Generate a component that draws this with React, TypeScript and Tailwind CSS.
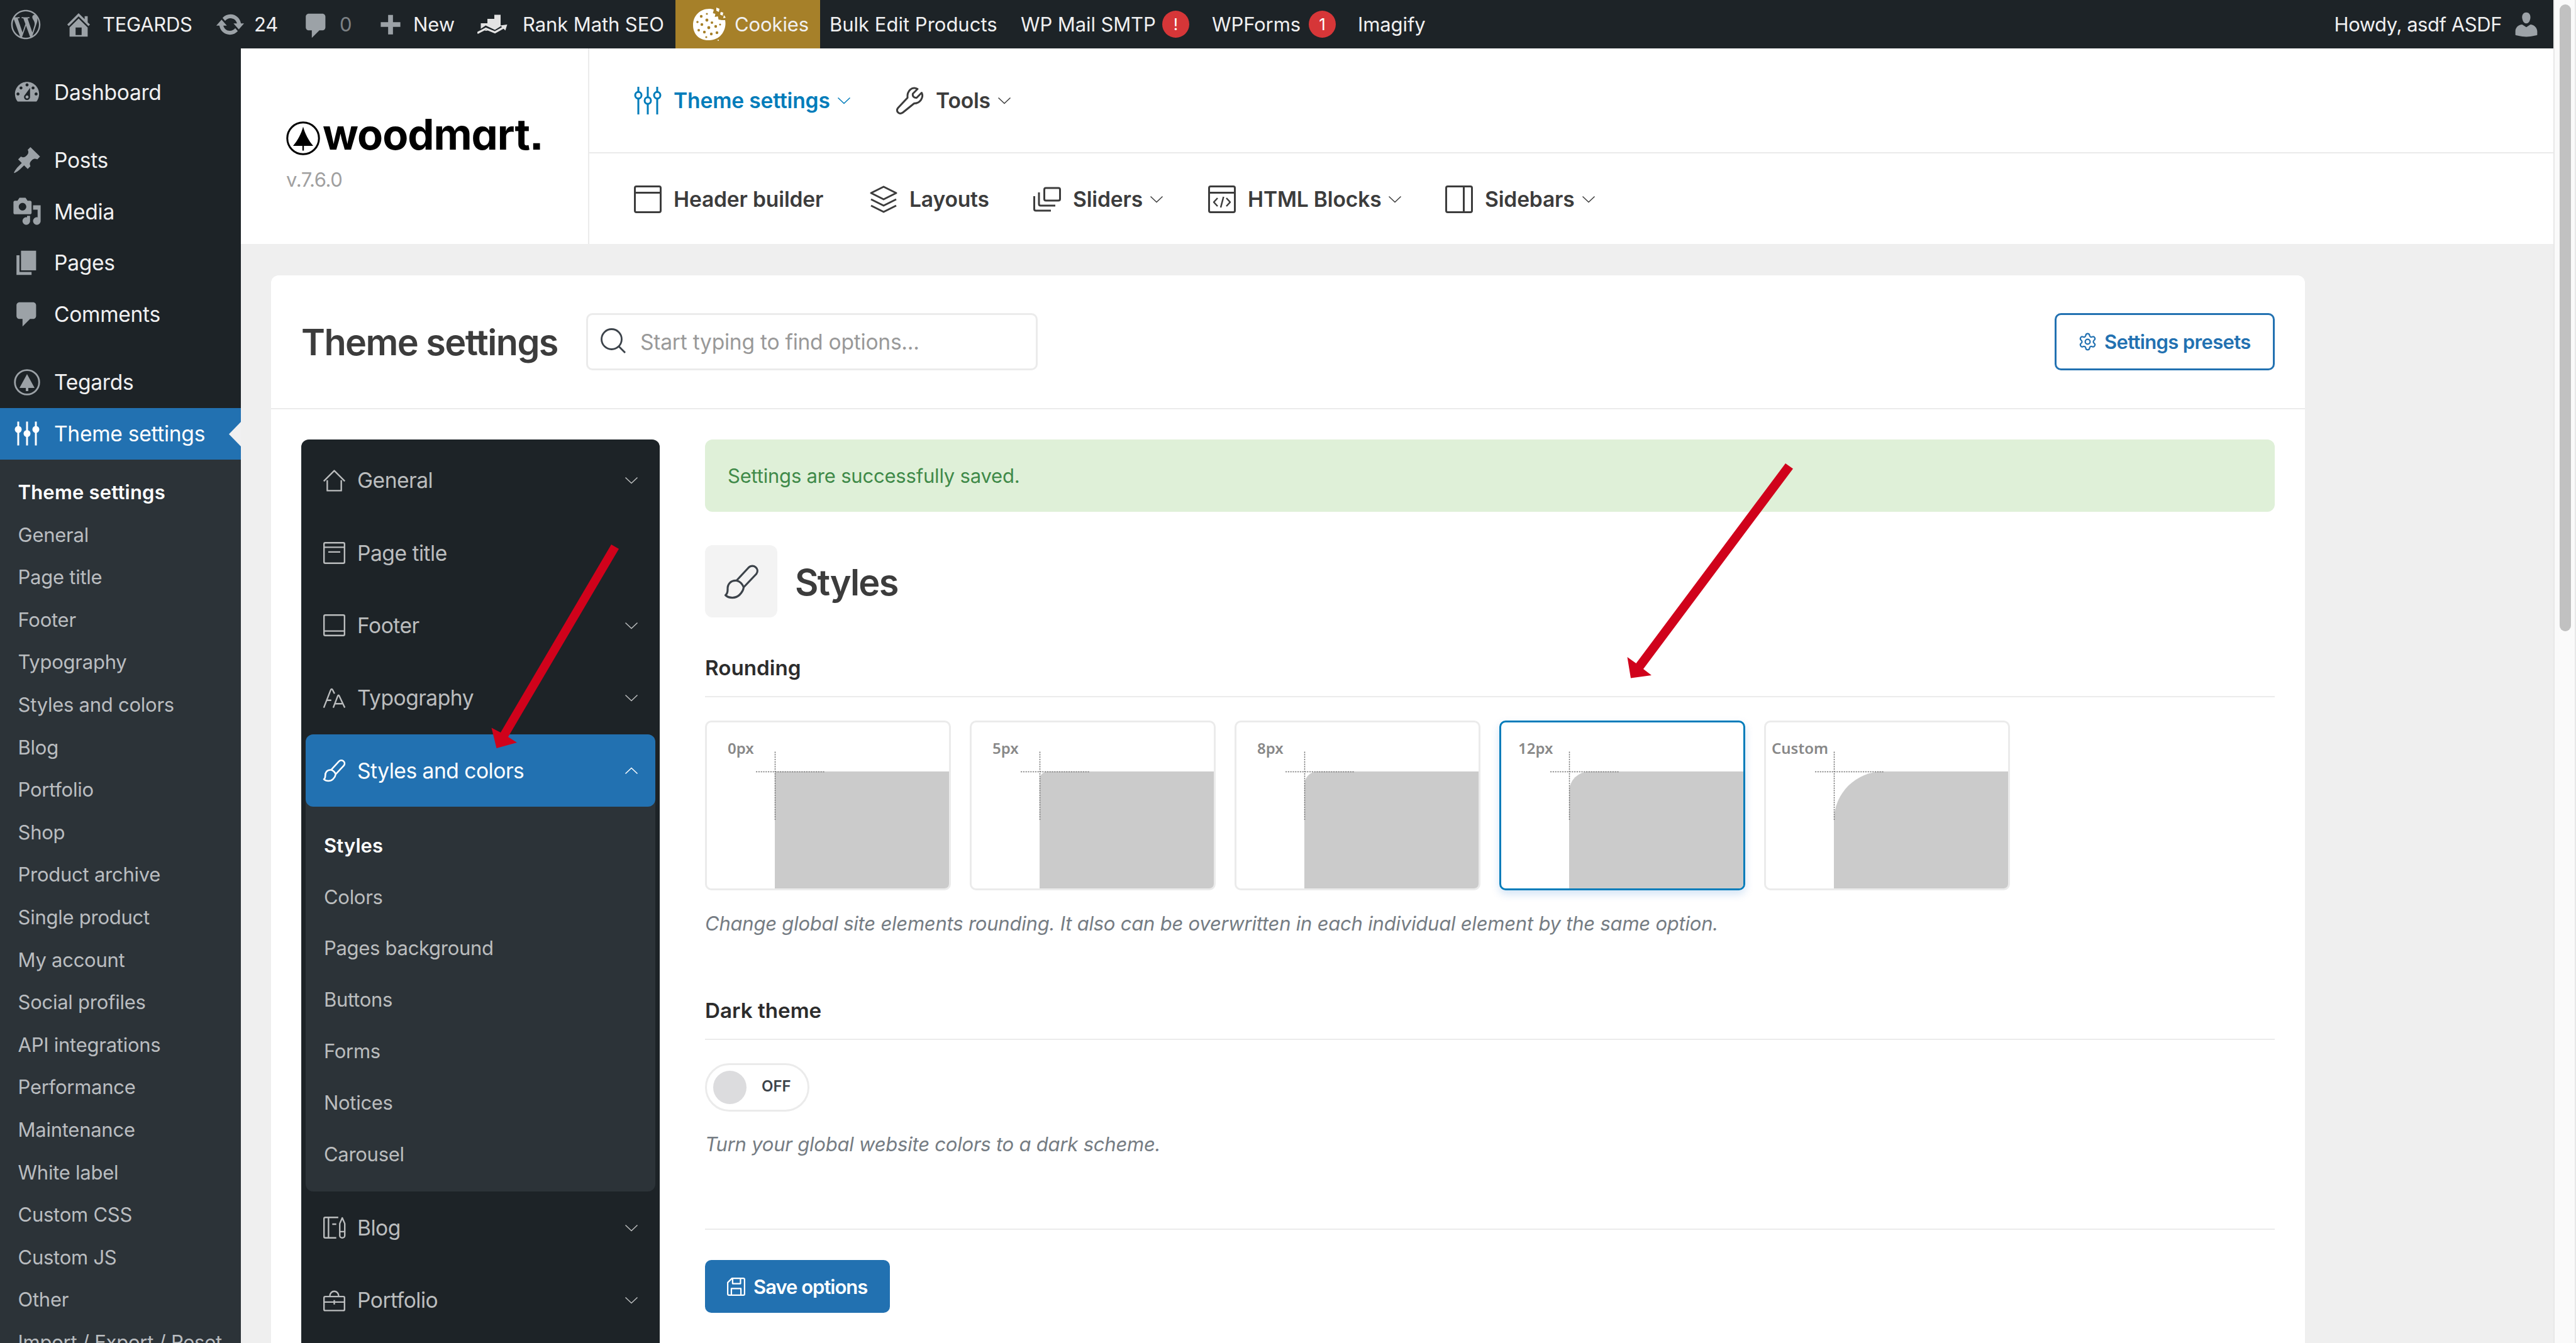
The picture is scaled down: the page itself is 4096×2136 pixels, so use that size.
import React from "react";
import clsx from "clsx";
import { Settings } from "lucide-react";
import { FaWordpressSimple } from "react-icons/fa";

type IconProps = { className?: string };

const dashicons = {
  home: "M16 8.5l1.53 1.53-1.06 1.06L10 4.6l-6.47 6.49-1.06-1.06L10 2.5l4 4v-2h2v4zm-6-2.46l6 5.99V18H4v-5.97zM12 17v-5H8v5h4z",
  update:
    "M10.2 3.28c3.53 0 6.43 2.61 6.92 6h2.08l-3.5 4-3.5-4h2.32c-.45-1.97-2.21-3.45-4.32-3.45-1.45 0-2.73.71-3.54 1.78L4.95 5.66C6.23 4.2 8.11 3.28 10.2 3.28zm-.4 13.44c-3.52 0-6.43-2.61-6.92-6H.8l3.5-4c1.17 1.33 2.33 2.67 3.5 4H5.48c.45 1.97 2.21 3.45 4.32 3.45 1.45 0 2.73-.71 3.54-1.78l1.71 1.95c-1.28 1.46-3.15 2.38-5.25 2.38z",
  comments:
    "M5 2h9c1.1 0 2 .9 2 2v7c0 1.1-.9 2-2 2h-2l-5 5v-5H5c-1.1 0-2-.9-2-2V4c0-1.1.9-2 2-2z",
  plus: "M8.4 3.6h3.2v4.8h4.9v3.2h-4.9v5H8.4v-5H3.5V8.4h4.9z",
  page: "M6 15V2h10v13H6zm-1 1h8v2H3V5h2v11z",
  post: "M10.44 3.02l1.82-1.82 6.36 6.35-1.83 1.82c-1.05-.68-2.48-.57-3.41.36l-.75.75c-.92.93-1.04 2.35-.35 3.41l-1.83 1.82-2.41-2.41-2.8 2.79c-.42.42-3.38 2.71-3.8 2.29s1.86-3.39 2.28-3.81l2.79-2.79L4.1 9.36l1.83-1.82c1.05.69 2.48.57 3.4-.36l.75-.75c.93-.92 1.05-2.35.36-3.41z",
  media:
    "M13 11V4c0-.55-.45-1-1-1h-1.67L9 1H5L3.67 3H2c-.55 0-1 .45-1 1v7c0 .55.45 1 1 1h10c.55 0 1-.45 1-1zM7 4.5c1.38 0 2.5 1.12 2.5 2.5S8.38 9.5 7 9.5 4.5 8.38 4.5 7 5.62 4.5 7 4.5zM14 6h5v10.5c0 1.38-1.12 2.5-2.5 2.5S14 17.88 14 16.5s1.12-2.5 2.5-2.5c.17 0 .34.02.5.05V9h-3V6zm-4 8.05V13h2v3.5c0 1.38-1.12 2.5-2.5 2.5S7 17.88 7 16.5 8.12 14 9.5 14c.17 0 .34.02.5.05z",
  dashboard:
    "M3.76 16h12.48c1.1-1.37 1.76-3.11 1.76-5 0-4.42-3.58-8-8-8s-8 3.58-8 8c0 1.89.66 3.63 1.76 5zM10 4c.55 0 1 .45 1 1s-.45 1-1 1-1-.45-1-1 .45-1 1-1zM6 6c.55 0 1 .45 1 1s-.45 1-1 1-1-.45-1-1 .45-1 1-1zm8 0c.55 0 1 .45 1 1s-.45 1-1 1-1-.45-1-1 .45-1 1-1zm-5.37 5.55L12 7v6c0 1.1-.9 2-2 2s-2-.9-2-2c0-.57.24-1.08.63-1.45zM4 10c.55 0 1 .45 1 1s-.45 1-1 1-1-.45-1-1 .45-1 1-1zm12 0c.55 0 1 .45 1 1s-.45 1-1 1-1-.45-1-1 .45-1 1-1zm-5 3c0-.55-.45-1-1-1s-1 .45-1 1 .45 1 1 1 1-.45 1-1z",
  user: "M10 9.25c-2.27 0-2.73-3.44-2.73-3.44C7 4.02 7.82 2 9.97 2c2.16 0 2.98 2.02 2.71 3.81 0 0-.41 3.44-2.68 3.44zm0 2.57L12.72 10c2.39 0 4.52 2.33 4.52 4.53v2.49s-3.65 1.13-7.24 1.13c-3.65 0-7.24-1.13-7.24-1.13v-2.49c0-2.25 1.94-4.48 4.47-4.48z",
};

const Dashicon = ({ name, className }: { name: keyof typeof dashicons; className?: string }) => (
  <svg viewBox="0 0 20 20" className={clsx("size-[48px] shrink-0 fill-[#9ca2a7]", className)}>
    <path fillRule="evenodd" d={dashicons[name]} />
  </svg>
);

// Outlined icon on a 44px grid
const Line = ({
  children,
  className = "size-[44px]",
  sw = 3,
}: {
  children: React.ReactNode;
  className?: string;
  sw?: number;
}) => (
  <svg
    viewBox="0 0 44 44"
    fill="none"
    stroke="currentColor"
    strokeWidth={sw}
    strokeLinejoin="round"
    className={clsx("shrink-0 overflow-visible", className)}
  >
    {children}
  </svg>
);

const SlidersIcon = () => (
  <Line>
    <path d="M7 0v8M7 19v25M22 0v16.5M22 27.500v16.500M37 0v8M37 19v25" />
    <ellipse cx="7" cy="13.500" rx="5" ry="5.300" />
    <ellipse cx="22" cy="22" rx="5" ry="5.300" />
    <ellipse cx="37" cy="13.500" rx="5" ry="5.300" />
  </Line>
);

const WrenchIcon = () => (
  <Line>
    <path d="M34 3.500 26.500 11c-1 4 2 7 6 6.500L40.500 9.500c3.500 7-2 17-12 17L10.500 41C5 45-1.500 39 3 33.500L18 17.500C17 7 25-1.500 34 3.500Z" />
  </Line>
);

const HeaderIcon = () => (
  <Line>
    <rect x="1.500" y="1.500" width="41" height="41" rx="2.500" />
    <path d="M2 11.500h40" />
  </Line>
);

const LayersIcon = () => (
  <Line>
    <path d="M22 2 42 12 22 22 2 12ZM2 22l20 10 20-10M2 32l20 10 20-10" />
  </Line>
);

const SlidesIcon = () => (
  <Line>
    <rect x="17.500" y="4" width="25" height="20" rx="2.500" />
    <path d="M9 11v18.500c0 1.500 1 2.500 2.500 2.500H35M1.500 17v20.500c0 1.500 1 2.500 2.500 2.500h24" />
  </Line>
);

const HtmlIcon = () => (
  <Line>
    <rect x="1.500" y="1.500" width="41" height="41" rx="2.500" />
    <path d="M2 11.500h40" />
    <path d="m15 20-6 6.500 6 6.500M29 20l6 6.500-6 6.500M24.500 18l-4.500 17" strokeWidth="2.500" />
  </Line>
);

const SidebarIcon = () => (
  <Line>
    <rect x="1.500" y="1.500" width="41" height="41" rx="2.500" />
    <path d="M29.500 2v40" />
  </Line>
);

const BrushIcon = ({ className, sw = 3 }: IconProps & { sw?: number }) => (
  <svg
    viewBox="0 0 54 54"
    fill="none"
    stroke="currentColor"
    strokeWidth={sw}
    strokeLinejoin="round"
    className={clsx("shrink-0 overflow-visible", className)}
  >
    <path d="M19 25.500 38.500 4.500C45-2 57 6 50.500 15L30.500 36" />
    <path d="M19 25.500C9 25 4.500 32 5 39.500 5 45 4 47 1.500 48.500 7 54 18 54 24 48 29 43 30 40 30.500 36 28 30 24 26.500 19 25.500Z" />
  </svg>
);

const Chevron = ({ className, up }: IconProps & { up?: boolean }) => (
  <svg
    viewBox="0 0 20 10"
    fill="none"
    stroke="currentColor"
    strokeWidth="1.500"
    className={clsx("h-[10px] w-[20px] shrink-0 overflow-visible", className)}
  >
    <path d={up ? "M.5 9.500 10 .5l9.500 9" : "M.5.5 10 9.500 19.500.5"} />
  </svg>
);

const CookieIcon = () => (
  <svg viewBox="0 0 52 54" className="h-[54px] w-[52px] shrink-0">
    <path
      fill="#fff"
      d="M26 2c3 0 5 .5 7 1.500L31.500 9l4 1-1 5 5-1 1 5 5 1 5.500 0c3 15-7 32-25 32C11 53 0 43 0 28 0 13 11 2 26 2Z"
    />
    <path fill="#fff" d="m37 0 5 2-1 5-4-2ZM44 7l4 1-1 5-4-2ZM49 12l3 4-4 1ZM38 52l3-1 0 2Z" />
    <g fill="#a68029">
      <circle cx="13" cy="14" r="2.200" />
      <circle cx="22" cy="10" r="1.600" />
      <circle cx="22" cy="20" r="2.400" />
      <circle cx="7" cy="23" r="1.800" />
      <circle cx="14" cy="27" r="2.200" />
      <circle cx="30" cy="24" r="2" />
      <circle cx="25" cy="32" r="2.400" />
      <circle cx="36" cy="30" r="2.200" />
      <circle cx="43" cy="27" r="1.500" />
      <circle cx="9" cy="36" r="2" />
      <circle cx="18" cy="39" r="2.200" />
      <circle cx="29" cy="42" r="2.200" />
      <circle cx="38" cy="40" r="2.200" />
      <circle cx="21" cy="47" r="1.600" />
    </g>
  </svg>
);

const RankMathIcon = () => (
  <svg viewBox="0 0 48 31" className="h-[31px] w-[48px] shrink-0">
    <path fill="#e3e3e3" d="M5.500 14H16V7h11V.5h10V26H5.500Z" />
    <path fill="none" stroke="#1d2327" strokeWidth="6" d="m0 30 13.500-9L28 28l16-10" />
    <path fill="#1d2327" d="M0 25 13 26 28 31H0Z" />
    <path fill="none" stroke="#e3e3e3" strokeWidth="3.200" d="m0 29.500 13.500-7L28 28.500l15-8.500" />
    <path fill="#e3e3e3" d="m36.500 17.500 11-1.500-3 9.500Z" />
  </svg>
);

const Badge = ({ children }: { children: React.ReactNode }) => (
  <span className="flex size-[43px] shrink-0 items-center justify-center rounded-full bg-[#d63638] text-[26px] text-white">
    {children}
  </span>
);

const AdminBar = () => (
  <div className="flex h-[77px] shrink-0 items-center bg-[#1d2327] text-[31px] leading-none tracking-[-0.1px] whitespace-nowrap text-[#f0f0f1]">
    <div className="w-[101px] shrink-0 pl-[17px]">
      <FaWordpressSimple className="size-[48px] text-[#9ca2a7]" />
    </div>
    <div className="flex w-[241px] shrink-0 items-center gap-[14px]">
      <Dashicon name="home" />
      <span className="tracking-[-0.3px]">TEGARDS</span>
    </div>
    <div className="flex w-[137px] shrink-0 items-center gap-[14px]">
      <Dashicon name="update" />
      <span>24</span>
    </div>
    <div className="flex w-[118px] shrink-0 items-center gap-[13px] text-[#7c8185]">
      <Dashicon name="comments" className="mt-[4px]" />
      <span>0</span>
    </div>
    <div className="flex w-[162px] shrink-0 items-center gap-[12px]">
      <Dashicon name="plus" />
      <span>New</span>
    </div>
    <div className="flex w-[315px] shrink-0 items-center gap-[24px]">
      <RankMathIcon />
      <span>Rank Math SEO</span>
    </div>
    <div className="flex h-full w-[230px] shrink-0 items-center gap-[14px] bg-[#a68029] pl-[28px]">
      <CookieIcon />
      <span>Cookies</span>
    </div>
    <div className="w-[319px] shrink-0 pl-[15px] tracking-[0px]">Bulk Edit Products</div>
    <div className="flex w-[304px] shrink-0 items-center justify-between pr-[36px]">
      <span>WP Mail SMTP</span>
      <Badge>!</Badge>
    </div>
    <div className="flex w-[232px] shrink-0 items-center justify-between pr-[35px]">
      <span>WPForms</span>
      <Badge>1</Badge>
    </div>
    <div>Imagify</div>
    <div className="ml-auto flex items-center gap-[15px] pr-[19px]">
      <span className="tracking-[-0.45px]">Howdy, asdf ASDF</span>
      <Dashicon name="user" />
    </div>
  </div>
);

const TreeBadgeIcon = () => (
  <svg viewBox="0 0 48 48" className="size-[48px] shrink-0 fill-[#9ca2a7]">
    <circle cx="24" cy="24" r="19.300" fill="none" stroke="#9ca2a7" strokeWidth="2.800" />
    <path d="M24 11 36 33H26v5h-4v-5H12Z" />
  </svg>
);

const AdminSlidersIcon = () => (
  <svg viewBox="0 0 48 48" className="size-[48px] shrink-0 fill-white">
    <path d="M8.500 4.500h3v38h-3ZM22.500 4.500h3v38h-3ZM36.500 4.500h3v38h-3Z" />
    <circle cx="10" cy="17" r="5.500" />
    <circle cx="24" cy="23.500" r="5.500" />
    <circle cx="38" cy="17" r="5.500" />
  </svg>
);

const adminItems: { label: string; icon: React.ReactNode; gap?: boolean }[] = [
  { label: "Dashboard", icon: <Dashicon name="dashboard" /> },
  { label: "Posts", icon: <Dashicon name="post" />, gap: true },
  { label: "Media", icon: <Dashicon name="media" /> },
  { label: "Pages", icon: <Dashicon name="page" /> },
  { label: "Comments", icon: <Dashicon name="comments" /> },
  { label: "Tegards", icon: <TreeBadgeIcon />, gap: true },
];

const adminSubItems = [
  "General",
  "Page title",
  "Footer",
  "Typography",
  "Styles and colors",
  "Blog",
  "Portfolio",
  "Shop",
  "Product archive",
  "Single product",
  "My account",
  "Social profiles",
  "API integrations",
  "Performance",
  "Maintenance",
  "White label",
  "Custom CSS",
  "Custom JS",
  "Other",
  "Import / Export / Reset",
];

const AdminMenu = () => (
  <aside className="flex w-[383px] shrink-0 flex-col overflow-hidden bg-[#1d2327] pt-[29px] leading-none whitespace-nowrap">
    {adminItems.map((item) => (
      <div
        key={item.label}
        className={clsx(
          "flex h-[81.8px] shrink-0 items-center gap-[19px] pl-[19px] text-[33.6px] tracking-[-0.3px] text-[#f0f0f1]",
          item.gap && "mt-[26px]"
        )}
      >
        {item.icon}
        <span>{item.label}</span>
      </div>
    ))}
    <div className="relative flex h-[82px] shrink-0 items-center gap-[19px] bg-[#2271b1] pl-[19px] text-[33.6px] tracking-[-0.3px] text-white">
      <AdminSlidersIcon />
      <span>Theme settings</span>
      <svg viewBox="0 0 19 39" className="absolute top-[22px] right-0 h-[39px] w-[19px] fill-[#f0f0f1]">
        <path d="M19 0v39L0 19.500Z" />
      </svg>
    </div>
    <div className="flex flex-1 flex-col bg-[#2c3338] pt-[18px] pl-[28.5px] text-[31px] tracking-[-0.25px] text-[#babdc0]">
      <div className="flex h-[67.6px] shrink-0 items-center font-semibold tracking-[0.2px] text-white">
        Theme settings
      </div>
      {adminSubItems.map((item) => (
        <div key={item} className="flex h-[67.6px] shrink-0 items-center">
          {item}
        </div>
      ))}
    </div>
  </aside>
);

const NavItem = ({
  icon,
  label,
  width,
  chevron,
  active,
}: {
  icon: React.ReactNode;
  label: string;
  width: string;
  chevron?: boolean;
  active?: boolean;
}) => (
  <div
    className={clsx(
      "flex shrink-0 items-center text-[33.6px] leading-none font-semibold tracking-[-0.15px] whitespace-nowrap",
      width,
      active ? "text-[#007cba]" : "text-[#3c3c3c]"
    )}
  >
    {icon}
    <span className="ml-[19px]">{label}</span>
    {chevron && <Chevron className="ml-[12px]" />}
  </div>
);

const ThemeHeader = () => (
  <header className="flex h-[311px] shrink-0 bg-white">
    <div className="flex w-[554px] shrink-0 flex-col border-r-2 border-[#ebebeb] pt-[103px] pl-[72px]">
      <div className="flex h-[60px] items-center gap-[4px] text-black">
        <svg viewBox="0 0 54 54" className="mt-[20px] size-[54px] shrink-0">
          <circle cx="27" cy="27" r="25.200" fill="none" stroke="#000" strokeWidth="3" />
          <path d="M27 8.500C30 20 36 31 43 39H28.200v7.500h-2.400V39H11C18 31 24 20 27 8.500Z" />
        </svg>
        <span className="mt-[6px] text-[67px] leading-none font-bold tracking-[-1px] [font-feature-settings:'cv11','ss07']">
          woodmart.
        </span>
      </div>
      <span className="mt-[30px] text-[31px] leading-none tracking-[-0.4px] text-[#a0a0a0]">v.7.6.0</span>
    </div>
    <div className="flex flex-1 flex-col">
      <div className="flex h-[167px] items-center border-b-2 border-[#ebebeb] pl-[71px]">
        <NavItem icon={<SlidersIcon />} label="Theme settings" width="w-[417px]" chevron active />
        <NavItem icon={<WrenchIcon />} label="Tools" width="w-[300px]" chevron />
      </div>
      <div className="flex flex-1 items-center pt-[1px] pl-[71px]">
        <NavItem icon={<HeaderIcon />} label="Header builder" width="w-[375px]" />
        <NavItem icon={<LayersIcon />} label="Layouts" width="w-[260px]" />
        <NavItem icon={<SlidesIcon />} label="Sliders" width="w-[278px]" chevron />
        <NavItem icon={<HtmlIcon />} label="HTML Blocks" width="w-[377px]" chevron />
        <NavItem icon={<SidebarIcon />} label="Sidebars" width="w-[300px]" chevron />
      </div>
    </div>
  </header>
);

const menuIcon = "size-[35px]";

const menuIcons = {
  general: (
    <Line className={menuIcon}>
      <path d="M1 23 22 2l21 21M8 21v21h28V21" />
    </Line>
  ),
  pageTitle: (
    <Line className={menuIcon}>
      <rect x="1.500" y="1.500" width="41" height="41" rx="2.500" />
      <path d="M2 10.500h40M10 20h24" />
    </Line>
  ),
  footer: (
    <Line className={menuIcon}>
      <rect x="1.500" y="1.500" width="41" height="41" rx="2.500" />
      <path d="M2 33.500h40" />
    </Line>
  ),
  typography: (
    <Line className={menuIcon}>
      <path d="M1 41 14.500 6.500c1.200-3.500 3.500-3.500 4.500-.5l3.500 7M7 26h9M20 41l9-23.500c.8-2 2.200-2 3 0L43 41M24 33h14" />
    </Line>
  ),
  blog: (
    <Line className={menuIcon}>
      <path d="M30 1.500H4c-1.500 0-2.500 1-2.500 2.500v36c0 1.500 1 2.500 2.500 2.500h22M10.500 2v40M18 15h8" />
      <path d="M38 2.500 43 14v24c0 6-10 6-10 0V14ZM33 30h10" />
    </Line>
  ),
  portfolio: (
    <Line className={menuIcon}>
      <rect x="1.500" y="14" width="41" height="28" rx="2.500" />
      <path d="M13 14c0-14 18-14 18 0M2 25h40M22 21v9" />
    </Line>
  ),
};

const MenuRow = ({
  icon,
  label,
  chevron = true,
}: {
  icon: React.ReactNode;
  label: string;
  chevron?: boolean;
}) => (
  <div className="flex h-[115.400px] shrink-0 items-center px-[28px] text-[#bbbdbe]">
    {icon}
    <span className="ml-[19px] flex-1">{label}</span>
    {chevron && <Chevron />}
  </div>
);

const subTabs = ["Colors", "Pages background", "Buttons", "Forms", "Notices", "Carousel"];

const SettingsMenu = () => (
  <div className="flex w-[570px] shrink-0 flex-col rounded-t-[12px] bg-[#1d2327] px-[7px] pt-[7px] text-[33.6px] leading-none tracking-[-0.5px] whitespace-nowrap">
    <MenuRow icon={menuIcons.general} label="General" />
    <MenuRow icon={menuIcons.pageTitle} label="Page title" chevron={false} />
    <MenuRow icon={menuIcons.footer} label="Footer" />
    <MenuRow icon={menuIcons.typography} label="Typography" />
    <div className="rounded-[12px] bg-[#2c3338]">
      <div className="flex h-[115.400px] items-center rounded-[12px] bg-[#2271b1] px-[28px] text-white">
        <BrushIcon className="size-[35px]" sw={4} />
        <span className="ml-[19px] flex-1">Styles and colors</span>
        <Chevron up />
      </div>
      <div className="px-[29px] pt-[20px] pb-[19px] text-[31px] tracking-[-0.3px] text-[#bbbdbe]">
        <div className="flex h-[81.800px] items-center font-semibold tracking-[0.1px] text-white">Styles</div>
        {subTabs.map((tab) => (
          <div key={tab} className="flex h-[81.800px] items-center">
            {tab}
          </div>
        ))}
      </div>
    </div>
    <MenuRow icon={menuIcons.blog} label="Blog" />
    <MenuRow icon={menuIcons.portfolio} label="Portfolio" />
  </div>
);

const roundings = [
  { label: "0px", radius: 0, x: 36 },
  { label: "5px", radius: 13, x: 36 },
  { label: "8px", radius: 21, x: 36 },
  { label: "12px", radius: 32, x: 30, active: true },
  { label: "Custom", radius: 78, x: 12 },
];

const RoundingCard = ({
  label,
  radius,
  x,
  active,
}: {
  label: string;
  radius: number;
  x: number;
  active?: boolean;
}) => (
  <div
    className={clsx(
      "h-[270px] w-[391px] overflow-hidden rounded-[10px] border-[3px] bg-white",
      active ? "border-[#007cba] shadow-[0_6px_14px_rgba(0,100,200,0.18)]" : "border-[#ebebeb]"
    )}
  >
    <svg viewBox="3 3 385 264" className="h-[264px] w-[385px]">
      <path
        fill="#cbcbcb"
        d={`M111 270V${81 + radius}A${radius} ${radius} 0 0 1 ${111 + radius} 81H391V270Z`}
      />
      <path d="M111.500 49.500v110M81 81.500h109" stroke="#777" strokeWidth="1.500" strokeDasharray="2.200 1.600" />
      <text x={x} y="52.500" fill="#888" fontSize="24" fontWeight="600" fontFamily="'Noto Sans', 'Open Sans', sans-serif">
        {label}
      </text>
    </svg>
  </div>
);

const SectionTitle = ({ children, className }: { children: React.ReactNode; className?: string }) => (
  <h3
    className={clsx(
      "border-b-2 border-[#ebebeb] pb-[25px] text-[33.200px] leading-[40px] font-semibold text-[#2c2c2c]",
      className
    )}
  >
    {children}
  </h3>
);

const Description = ({ children, className }: { children: React.ReactNode; className?: string }) => (
  <p className={clsx("text-[31px] leading-[40px] tracking-[-0.22px] text-[#757c83] italic", className)}>{children}</p>
);

const SettingsContent = () => (
  <div className="flex flex-1 flex-col">
    <div className="flex h-[115px] items-center rounded-[12px] bg-[#dff0d8] pl-[36px] text-[31px] leading-none tracking-[-0.2px] text-[#3f8a49]">
      Settings are successfully saved.
    </div>
    <div className="mt-[53px] flex items-center">
      <div className="flex size-[115px] items-center justify-center rounded-[12px] bg-[#f3f3f3] text-[#3c434a]">
        <BrushIcon className="size-[54px]" sw={3.2} />
      </div>
      <h2 className="mt-[4px] ml-[28px] text-[57.600px] leading-none font-semibold tracking-[-1.7px] text-[#3c3c3c]">
        Styles
      </h2>
    </div>
    <SectionTitle className="mt-[60px]">Rounding</SectionTitle>
    <div className="mt-[37px] flex gap-[30px]">
      {roundings.map((item) => (
        <RoundingCard key={item.label} {...item} />
      ))}
    </div>
    <Description className="mt-[33px]">
      Change global site elements rounding. It also can be overwritten in each individual element by the same option.
    </Description>
    <SectionTitle className="mt-[98px]">Dark theme</SectionTitle>
    <div className="mt-[37px] flex h-[77px] w-[166px] items-center rounded-full border-[3px] border-[#ebebeb] pl-[10px]">
      <span className="size-[53px] rounded-full bg-[#dcdcde]" />
      <span className="-mt-[3px] ml-[24px] text-[24px] leading-none font-semibold text-[#3c434a]">OFF</span>
    </div>
    <Description className="mt-[32px]">Turn your global website colors to a dark scheme.</Description>
    <div className="mt-[114px] border-t-2 border-[#ebebeb] pt-[48px]">
      <button className="flex h-[84px] w-[294px] items-center rounded-[10px] bg-[#2271b1] pl-[35px] text-[31px] leading-none font-semibold tracking-[-1px] whitespace-nowrap text-white">
        <Line className="size-[29px]" sw={3.4}>
          <path d="M12 1.700h27.500c1.700 0 2.800 1.100 2.800 2.800v35c0 1.700-1.100 2.800-2.800 2.800h-35c-1.700 0-2.800-1.100-2.800-2.800V12ZM13.500 2v12.500h19V2M10.500 42V26.500h23V42" />
        </Line>
        <span className="ml-[13px]">Save options</span>
      </button>
    </div>
  </div>
);

const SettingsPanel = () => (
  <section className="mt-[50px] ml-[48px] flex w-[3234px] flex-1 flex-col rounded-t-[12px] bg-white">
    <div className="flex h-[213.400px] shrink-0 items-center border-b-2 border-[#ebebeb] px-[48px]">
      <h1 className="w-[453px] pt-[2px] text-[57.600px] leading-none font-semibold tracking-[-1.600px] whitespace-nowrap text-[#3c3c3c]">
        Theme settings
      </h1>
      <div className="flex h-[91px] w-[718px] items-center rounded-[10px] border-[3px] border-[#ebebeb] pl-[20px] text-[33.600px] leading-none tracking-[-0.25px] text-[#999]">
        <svg
          viewBox="0 0 40 40"
          fill="none"
          stroke="#3c434a"
          strokeWidth="2.800"
          className="-mt-[4px] size-[40px] shrink-0"
        >
          <circle cx="17.500" cy="17.500" r="16" />
          <path d="m28.500 28.500 10.500 10.500" />
        </svg>
        <span className="ml-[23px]">Start typing to find options...</span>
      </div>
      <button className="ml-auto flex h-[91px] w-[350px] items-center rounded-[10px] border-[3px] border-[#2271b1] pl-[34px] text-[31px] leading-none font-semibold tracking-[-0.65px] whitespace-nowrap text-[#2271b1]">
        <Settings className="size-[31px] shrink-0" strokeWidth={1.7} />
        <span className="ml-[11px]">Settings presets</span>
      </button>
    </div>
    <div className="flex flex-1 gap-[72px] px-[48px] pt-[48px]">
      <SettingsMenu />
      <SettingsContent />
    </div>
  </section>
);

// Pointers drawn on top of the page
const Arrows = () => (
  <svg viewBox="0 0 4096 2136" className="pointer-events-none absolute inset-0 h-[2136px] w-[4096px] fill-[#d0021b]">
    <path d="M972 866 984 873 808 1172 822 1181 789.500 1190 781.500 1157.500 796 1165Z" />
    <path d="M2839 737 2851 745.500 2613 1064 2626 1074 2593 1078.500 2587.500 1045 2601.500 1055Z" />
  </svg>
);

export default function App() {
  return (
    <div className="relative flex h-[2136px] w-[4096px] overflow-hidden bg-[#f0f0f1] font-[Inter,'Liberation_Sans',sans-serif]">
      <div className="flex w-[4060px] shrink-0 flex-col">
        <AdminBar />
        <div className="flex min-h-0 flex-1">
          <AdminMenu />
          <main className="flex flex-1 flex-col overflow-hidden bg-[#efefef]">
            <ThemeHeader />
            <SettingsPanel />
          </main>
        </div>
      </div>
      <div className="w-[36px] shrink-0 border-r-[2px] border-l-[2px] border-[#e8e8e8] bg-[#fafafa] pt-[7px] pl-[8px]">
        <div className="h-[997px] w-[18px] rounded-full bg-[#c1c1c1]" />
      </div>
      <Arrows />
    </div>
  );
}
